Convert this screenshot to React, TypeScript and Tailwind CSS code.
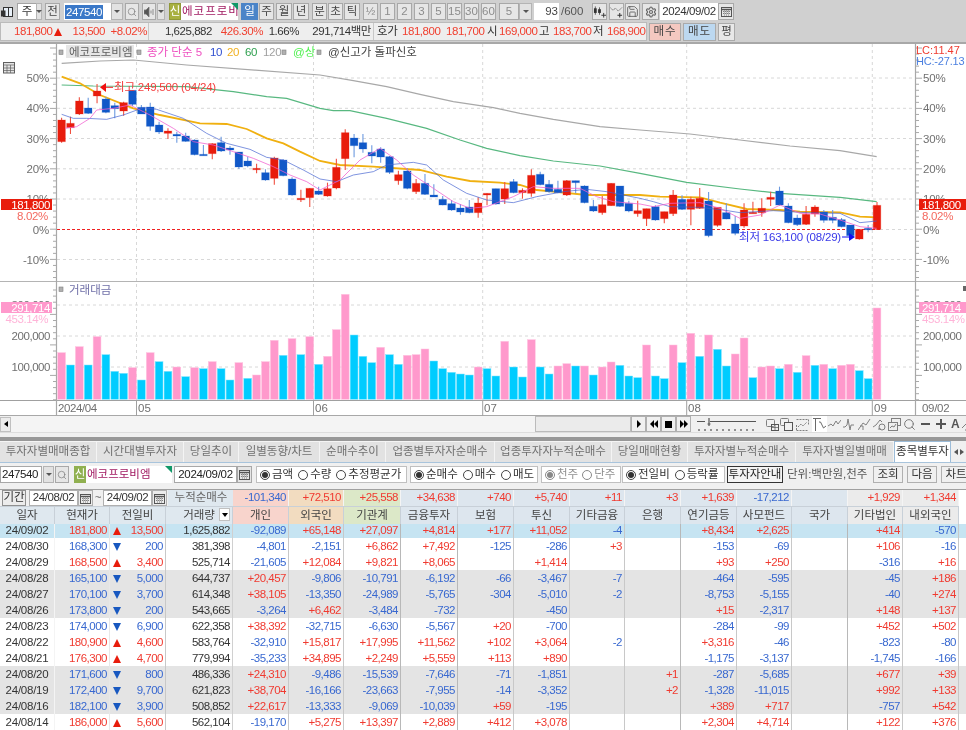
import React from "react";
import { Search, Settings, Save } from "lucide-react";

// [dir, bodyTop, bodyBottom, wickTop, wickBottom] — zoom coordinates (3x, origin y=60); dir 1 = red, 0 = blue
const C: number[][] = [
[1,180,245,173,248],[1,190,203,170,222],[1,123,162,112,165],[0,144,160,113,162],[1,93,108,72,130],[0,117,157,110,160],[0,137,146,128,175],[1,128,153,125,167],[0,91,133,91,138],[0,142,162,135,162],
[0,141,199,128,212],[0,195,216,185,222],[1,213,220,205,237],[0,223,228,215,248],[0,228,244,218,245],[0,240,284,238,286],[0,283,285,255,286],[1,251,281,250,298],[0,248,273,230,276],[0,264,270,258,284],
[0,276,321,276,327],[0,303,318,290,322],[1,325,329,311,340],[0,338,360,328,362],[1,294,355,290,374],[0,300,347,298,349],[0,357,405,352,407],[1,415,418,389,426],[1,385,413,385,441],[0,393,403,380,405],
[1,386,408,368,410],[1,322,384,296,388],[1,218,296,208,330],[0,234,257,222,292],[0,248,267,222,278],[0,277,288,256,310],[0,267,291,262,308],[0,290,337,288,342],[1,344,362,332,374],[0,333,385,325,388],
[1,370,395,357,402],[0,370,403,342,405],[0,405,411,373,411],[0,418,435,408,436],[0,431,450,420,452],[0,444,456,432,464],[0,441,458,420,460],[1,429,458,412,473],[1,400,405,400,436],[0,386,432,386,434],
[1,386,417,366,432],[0,365,398,357,400],[1,391,398,385,416],[1,346,400,328,410],[0,343,374,335,376],[0,373,395,360,398],[0,388,398,362,400],[1,362,405,360,408],[0,362,368,362,400],[0,378,428,376,430],
[0,439,453,420,456],[1,434,458,408,464],[1,370,437,370,437],[0,378,439,378,441],[0,430,453,422,457],[1,452,461,422,470],[1,446,476,446,498],[0,440,480,436,482],[1,455,476,455,490],[1,405,461,390,468],
[0,418,448,406,450],[1,418,448,410,496],[1,415,445,384,447],[0,423,527,396,532],[1,442,496,442,500],[0,458,477,430,478],[0,492,520,468,526],[1,450,498,430,503],[1,457,459,425,460],[1,445,458,415,470],
[1,412,418,395,438],[0,393,435,380,437],[0,438,488,430,490],[0,474,494,464,498],[1,463,493,438,495],[1,441,462,436,470],[0,456,481,450,488],[0,472,481,450,490],[0,479,500,474,502],[0,495,527,495,530],
[1,508,537,508,539],[0,505,508,495,517],[1,436,508,426,510],
];
// volume: [isPink, top] — zoom coordinates (3x, origin y=280)
const V: [number, number][] = [
[1,218],[0,255],[1,200],[0,255],[1,170],[0,224],[0,274],[0,280],[1,263],[0,300],[1,218],[0,245],[0,274],[1,261],[0,290],[1,263],[0,266],[1,245],[0,266],[0,300],[1,248],[0,295],[1,285],[1,245],[1,181],[0,226],[1,176],[0,224],[1,170],[0,253],[1,229],[1,149],[1,43],[0,165],[0,229],[0,248],[1,202],[0,224],[0,253],[1,226],[1,224],[1,207],[0,243],[0,266],[0,277],[0,282],[0,285],[1,261],
[0,266],[0,288],[1,184],[0,261],[0,291],[1,179],[0,261],[0,282],[1,258],[1,251],[0,258],[1,258],[0,285],[1,261],[1,246],[0,256],[0,288],[0,293],[1,195],[0,288],[0,296],[1,195],[0,248],[1,160],[0,229],[1,165],[0,208],[0,258],[1,222],[1,174],[0,293],[1,261],[1,258],[0,266],[1,253],[0,277],[1,227],[0,256],[1,253],[0,266],[1,256],[1,253],[0,272],[0,296],[1,84],
];
const line = (segs: [number, number[][]][]) =>
  segs.flatMap(([ox, pts]) => pts.map(([x, y]) => `${ox + x / 3},${60 + y / 3}`)).join(" ");
const MA_120 = line([[0,[[185,10],[300,3],[400,0],[560,15],[960,45]]],[320,[[100,62],[200,80],[300,103],[400,125],[520,143],[600,160],[700,178],[840,200],[960,210]]],[640,[[150,222],[300,240],[450,258],[600,272],[710,290]]]]);
const MA_60 = line([[0,[[185,75],[280,78],[560,80],[700,95],[800,110],[860,115],[960,145]]],[320,[[40,152],[90,152],[200,175],[320,205],[420,240],[500,265],[600,287],[700,303],[840,318],[960,340]]],[640,[[140,367],[300,387],[420,400],[600,412],[710,425]]]]);
const MA_20 = line([[0,[[185,50],[240,70],[300,105],[400,145],[480,165],[600,190],[680,192],[740,207],[800,235],[850,250],[900,275],[960,303]]],[320,[[60,315],[160,320],[300,330],[380,350],[450,363],[540,368],[600,375],[650,390],[700,395],[800,405],[960,405]]],[640,[[60,410],[180,412],[240,428],[320,447],[420,450],[480,455],[600,457],[660,470],[710,472]]]]);
const MA_10 = line([[0,[[185,163],[220,175],[260,175],[320,178],[370,165],[430,143],[470,148],[550,175],[620,220],[680,250],[750,268],[800,292],[850,300],[910,330],[960,357]]],[320,[[50,365],[100,345],[160,335],[200,315],[280,307],[320,315],[370,360],[440,400],[500,420],[580,428],[650,410],[730,395],[800,388],[860,395],[960,415]]],[640,[[40,425],[90,440],[180,442],[250,450],[300,458],[400,452],[500,458],[600,460],[660,488],[710,483]]]]);
const MA_5 = line([[0,[[195,205],[230,200],[270,175],[290,150],[340,145],[390,135],[450,165],[520,205],[580,245],[640,255],[700,275],[760,295],[820,320],[870,345],[920,365],[960,390]]],[320,[[60,360],[120,300],[180,265],[230,300],[280,345],[340,385],[400,425],[450,445],[500,440],[580,410],[640,380],[700,385],[780,385],[830,410],[880,425],[960,432]]],[640,[[40,440],[90,430],[180,428],[240,445],[300,475],[360,465],[420,435],[480,460],[540,462],[600,480],[660,500],[710,505]]]]);

const cx = (i: number) => 61.6 + i * 8.863;
const GRID_X = [136.5, 313.5, 482.7, 686.7, 872.3];
const PCT = [[50,78],[40,108.3],[30,138.5],[20,168.8],[10,199]];
const AXIS = "#a8a8a8";

function Chart() {
  return (
    <svg width="966" height="373" viewBox="0 43 966 373" className="block">
      <rect x="0" y="43" width="966" height="373" fill="#fff" />
      {[...PCT.map((p) => p[1]), 259.5, 305, 336, 367].map((y) => (
        <line key={y} x1="57" x2="915" y1={y} y2={y} stroke="#d8d8d8" strokeDasharray="3 3" />
      ))}
      {GRID_X.map((x) => (
        <line key={x} x1={x} x2={x} y1="44" y2="400" stroke="#d8d8d8" strokeDasharray="3 3" />
      ))}
      <line x1="57" x2="880" y1="229.5" y2="229.5" stroke="#f02020" strokeDasharray="3 2" />
      <line x1="880" x2="915" y1="229.5" y2="229.5" stroke="#d8d8d8" strokeDasharray="3 3" />
      <line x1="0" x2="966" y1="43.5" y2="43.5" stroke="#a8a8a8" />
      <line x1="0" x2="966" y1="281.5" y2="281.5" stroke="#b4b4b4" strokeWidth="1.2" />
      <line x1="0" x2="966" y1="400.5" y2="400.5" stroke="#a0a0a0" />
      <line x1="0" x2="966" y1="415.5" y2="415.5" stroke="#a8a8a8" />
      <line x1="56.5" x2="56.5" y1="44" y2="416" stroke={AXIS} strokeWidth="1.2" />
      <line x1="915.5" x2="915.5" y1="44" y2="416" stroke={AXIS} strokeWidth="1.2" />
      {GRID_X.map((x) => (
        <line key={x} x1={x} x2={x} y1="400" y2="416" stroke="#a0a0a0" />
      ))}
      {Array.from({ length: 39 }, (_, i) => 48 + i * 6.04).map((y, i) => (
        <g key={y} stroke={AXIS}>
          <line x1={i % 5 === 0 ? 50 : 53} x2="56" y1={y} y2={y} />
          <line x1="916" x2={i % 5 === 0 ? 922 : 919} y1={y} y2={y} />
        </g>
      ))}
      {Array.from({ length: 19 }, (_, i) => 290 + i * 6.1).map((y, i) => (
        <g key={y} stroke={AXIS}>
          <line x1={(i + 1) % 5 === 0 ? 50 : 53} x2="56" y1={y} y2={y} />
          <line x1="916" x2={(i + 1) % 5 === 0 ? 922 : 919} y1={y} y2={y} />
        </g>
      ))}
      <polyline points={MA_120} fill="none" stroke="#a8a8a8" strokeWidth="1.2" />
      <polyline points={MA_60} fill="none" stroke="#58b880" strokeWidth="1.2" />
      <polyline points={MA_20} fill="none" stroke="#f0b010" strokeWidth="1.8" />
      {C.map((c, i) => {
        const x = cx(i);
        const col = c[0] ? "#e81c0c" : "#1058c8";
        const h = Math.max((c[2] - c[1]) / 3, 1.4);
        return (
          <g key={i}>
            <line x1={x} x2={x} y1={60 + c[3] / 3} y2={60 + c[4] / 3} stroke={c[0] ? "#f05040" : "#6c9ae0"} strokeWidth="1.1" />
            <rect x={x - 3.8} y={60 + c[1] / 3} width="7.6" height={h} fill={col} stroke={col} strokeOpacity="0.25" strokeWidth="1" />
          </g>
        );
      })}
      <polyline points={MA_10} fill="none" stroke="#4060d0" strokeWidth="0.9" opacity="0.75" />
      <polyline points={MA_5} fill="none" stroke="#f060d0" strokeWidth="0.9" opacity="0.85" />
      <g>
        <line x1="104" x2="113" y1="87.3" y2="87.3" stroke="#f02020" />
        <polygon points="100,87.3 106,83 106,92" fill="#f01010" />
        <text x="114" y="90.5" fontSize="11.5" fill="#f43c3c" letterSpacing="-0.2">최고 249,500 (04/24)</text>
        <text x="739" y="241" fontSize="11.5" fill="#3838e8" letterSpacing="-0.2">최저 163,100 (08/29)</text>
        <line x1="842" x2="851" y1="237" y2="237" stroke="#1010f0" />
        <polygon points="855,237 849,233 849,241" fill="#1010f0" />
      </g>
      {V.map(([p, top], i) => (
        <rect key={i} x={cx(i) - 3.9} y={280 + top / 3} width="7.8" height={399.3 - (280 + top / 3)} fill={p ? "#ff99cc" : "#00ccff"} stroke={p ? "#ffc4e0" : "#80e4ff"} strokeWidth="0.5" />
      ))}
      <g fontSize="11.5" fill="#707070">
        {[...PCT, [0, 229.5], [-10, 259.5]].map(([p, y]) => (
          <React.Fragment key={p}>
            <text x="49" y={y + 4} textAnchor="end" letterSpacing="-0.2">{p}%</text>
            <text x="923" y={y + 4} letterSpacing="-0.2">{p}%</text>
          </React.Fragment>
        ))}
        {[["200,000", 336], ["100,000", 367], ["300,000", 305]].map(([t, y]) => (
          <React.Fragment key={t as string}>
            <text x="50" y={(y as number) + 4} textAnchor="end" letterSpacing="-0.45">{t}</text>
            <text x="923" y={(y as number) + 4} letterSpacing="-0.45">{t}</text>
          </React.Fragment>
        ))}
        <text x="58" y="412" letterSpacing="-0.4">2024/04</text>
        <text x="138" y="412">05</text>
        <text x="315" y="412">06</text>
        <text x="484" y="412">07</text>
        <text x="688" y="412">08</text>
        <text x="874" y="412">09</text>
        <text x="922" y="412" letterSpacing="-0.3">09/02</text>
      </g>
      <rect x="1" y="199" width="51" height="11" fill="#e81c0c" />
      <rect x="919" y="199" width="47" height="11" fill="#e81c0c" />
      <text x="50" y="208.5" textAnchor="end" fontSize="11.5" fill="#fff" letterSpacing="-0.4">181,800</text>
      <text x="922" y="208.5" fontSize="11.5" fill="#fff" letterSpacing="-0.4">181,800</text>
      <text x="48" y="219.5" textAnchor="end" fontSize="11.5" fill="#f46a60" letterSpacing="-0.3">8.02%</text>
      <text x="922" y="219.5" fontSize="11.5" fill="#f46a60" letterSpacing="-0.3">8.02%</text>
      <rect x="1" y="302" width="51" height="11" fill="#ff99cc" />
      <rect x="919" y="302" width="47" height="11" fill="#ff99cc" />
      <text x="50" y="311.5" textAnchor="end" fontSize="11.5" fill="#fff" letterSpacing="-0.4">291,714</text>
      <text x="922" y="311.5" fontSize="11.5" fill="#fff" letterSpacing="-0.4">291,714</text>
      <text x="48" y="322.5" textAnchor="end" fontSize="11.5" fill="#ffb4d8" letterSpacing="-0.4">453.14%</text>
      <text x="922" y="322.5" fontSize="11.5" fill="#ffb4d8" letterSpacing="-0.4">453.14%</text>
      <text x="916" y="54" fontSize="11" fill="#f03c30">LC:11.47</text>
      <text x="916" y="65" fontSize="11" fill="#4c80e0" letterSpacing="-0.2">HC:-27.13</text>
      <g fontSize="11.5">
        {[61, 139, 284, 319].map((x) => (
          <rect key={x} x={x - 2} y="50" width="4" height="4.5" fill="#b0b0b0" stroke="#808080" strokeWidth="0.6" />
        ))}
        <rect x="66" y="45" width="68" height="13" fill="#e6e6e6" />
        <text x="69" y="56" fill="#606060">에코프로비엠</text>
        <text x="147" y="56" fill="#ee50c0">종가 단순 5</text>
        <text x="210" y="56" fill="#3050d0" letterSpacing="-0.3">10</text>
        <text x="227" y="56" fill="#f0b020" letterSpacing="-0.3">20</text>
        <text x="245" y="56" fill="#30a050" letterSpacing="-0.3">60</text>
        <text x="263" y="56" fill="#a0a0a0" letterSpacing="-0.3">120</text>
        <text x="293" y="56" fill="#50f050">@상</text>
        <text x="328" y="56" fill="#444">@신고가 돌파신호</text>
        <rect x="59" y="287" width="4" height="4.5" fill="#b0b0b0" stroke="#808080" strokeWidth="0.6" />
        <text x="69" y="294" fill="#7070a8">거래대금</text>
      </g>
      <g fill="none" stroke="#606060">
        <rect x="3.5" y="62.5" width="11" height="10.5" fill="#e4e4e4" />
        <path d="M3.5 65h11M3.5 68h11M3.5 70.5h11M7 65v8M10.5 65v8" strokeWidth="0.7" />
      </g>
      <rect x="963" y="286" width="3" height="5" fill="#666" />
    </svg>
  );
}

function B({ c = "", t = "text-[#444]", children }: { c?: string; t?: string; children?: React.ReactNode }) {
  return (
    <div className={`h-[17px] flex items-center justify-center border border-[#a8a8a8] bg-[#e6e6e6] shrink-0 ${t} ${c}`}>
      {children}
    </div>
  );
}
function Dd({ c = "" }: { c?: string }) {
  return (
    <div className={`h-[17px] flex items-center justify-center border border-[#b4b4b4] bg-[#e2e2e2] shrink-0 ${c}`}>
      <span className="w-0 h-0 border-x-[3px] border-x-transparent border-t-[3px] border-t-[#555]" />
    </div>
  );
}
function Cal() {
  return (
    <svg width="11" height="11" viewBox="0 0 11 11" fill="none" stroke="#555">
      <rect x="0.5" y="1.5" width="10" height="9" />
      <path d="M0.5 3.5h10" strokeWidth="1.4" />
      <path d="M2 5.5h7M2 7.5h7M3.5 4.5v5M5.5 4.5v5M7.5 4.5v5" strokeWidth="0.7" strokeDasharray="1 1" />
    </svg>
  );
}
function CandleIcon() {
  return (
    <svg width="14" height="12" viewBox="0 0 14 12" fill="#333" stroke="#333">
      <path d="M2.5 0v9M7 1v8" strokeWidth="0.8" />
      <rect x="1" y="2" width="3" height="5" stroke="none" />
      <rect x="5.5" y="3" width="3" height="4" stroke="none" />
      <path d="M9 9.5h5M11.5 7v5" strokeWidth="1" fill="none" />
    </svg>
  );
}
function LineIcon() {
  return (
    <svg width="14" height="12" viewBox="0 0 14 12" fill="none" stroke="#666">
      <path d="M0 1l3 3 3-2 3 3 4-4" strokeWidth="0.9" strokeDasharray="2 0.6" />
      <path d="M8 9.5h5M10.5 7v5" stroke="#333" strokeWidth="1.1" />
    </svg>
  );
}

function Toolbar1() {
  const T = "w-[15px] ml-[2px]";
  const G = "text-[#8c8c8c]";
  return (
    <div className="flex items-start h-[22px] pt-[3px] bg-[#d0d0d0] text-[11.5px]">
      <div className="w-[13px] h-[17px] shrink-0 flex items-center justify-end">
        <svg width="12" height="12" viewBox="0 0 12 12" fill="none" stroke="#333">
          <rect x="2.5" y="1.5" width="9" height="9" fill="#e8f0f8" />
          <path d="M7.5 1.5v9" />
          <rect x="0" y="5" width="4" height="5" fill="#333" />
        </svg>
      </div>
      <div className="ml-[4px] w-[20px] h-[17px] bg-white border border-[#a4a4a4] flex items-center justify-center shrink-0 text-[#333]">주</div>
      <Dd c="w-[6px] -ml-px" />
      <B c="w-[15px] ml-[3px]">전</B>
      <div className="ml-[4px] w-[47px] h-[17px] bg-white flex items-center pl-px shrink-0">
        <span className="bg-[#3a78c8] text-white px-px tracking-[-0.4px] leading-[14px]">247540</span>
      </div>
      <Dd c="w-[12px]" />
      <B c="w-[14px] ml-[2px]"><Search size={10} strokeWidth={1.6} color="#777" /></B>
      <B c="w-[14px] ml-[3px]">
        <svg width="11" height="10" viewBox="0 0 11 10" fill="#555"><path d="M0 3h2l3-3v10L2 7H0zM7 3.5v3M9 2v6" stroke="#777" strokeWidth="0.8" /></svg>
      </B>
      <Dd c="w-[8px] ml-px" />
      <div className="ml-[4px] w-[12px] h-[17px] bg-[#a8b040] text-white flex items-center justify-center shrink-0 border border-[#909838]">신</div>
      <div className="relative w-[57px] h-[17px] bg-white text-[#a01860] flex items-center overflow-hidden whitespace-nowrap shrink-0 pl-px tracking-[1px]">
        에코프로비
        <span className="absolute top-0 right-0 w-0 h-0 border-l-[7px] border-l-transparent border-t-[7px] border-t-[#109868]" />
      </div>
      <div className="ml-[3px] w-[17px] h-[17px] bg-[#4a84c8] text-white flex items-center justify-center shrink-0">일</div>
      <B c="w-[15px] ml-px">주</B>
      <B c="w-[16px] ml-[2px]">월</B>
      <B c="w-[16px] ml-px">년</B>
      <B c="w-[15px] ml-[3px]">분</B>
      <B c="w-[15px] ml-px">초</B>
      <B c="w-[16px] ml-px">틱</B>
      <B c="w-[15px] ml-[3px]" t={G}>½</B>
      <B c={T} t={G}>1</B><B c={T} t={G}>2</B><B c={T} t={G}>3</B><B c={T} t={G}>5</B>
      <B c="w-[15px] ml-px" t={G}>15</B><B c={T} t={G}>30</B><B c={T} t={G}>60</B>
      <B c="w-[20px] ml-[3px]" t={G}>5</B>
      <Dd c="w-[13px]" />
      <div className="ml-[2px] w-[25px] h-[17px] bg-white flex items-center justify-end pr-px shrink-0 text-[#444]">93</div>
      <div className="ml-[2px] w-[29px] shrink-0 h-[17px] flex items-center text-[#555]">/600</div>
      <B c="w-[15px] ml-[2px]"><CandleIcon /></B>
      <B c="w-[15px] ml-[2px]"><LineIcon /></B>
      <B c="w-[15px] ml-px"><Save size={13} strokeWidth={1.5} color="#555" /></B>
      <B c="w-[17px] ml-[2px]"><Settings size={12} strokeWidth={2.4} color="#666" /></B>
      <div className="ml-px w-[58px] h-[17px] bg-white flex items-center justify-center shrink-0 text-[#333] tracking-[-0.4px]">2024/09/02</div>
      <B c="w-[16px]"><Cal /></B>
    </div>
  );
}

function Toolbar2() {
  const R = "text-[#f04030]";
  return (
    <div className="flex h-[21px] bg-[#d0d0d0] border-b border-[#a8a8a8] text-[11.5px]">
      <div className="w-[647px] h-[19px] bg-[#eeeeee] border border-[#bbbbbb] shrink-0 whitespace-nowrap">
        <div className="flex h-full items-center tracking-[-0.45px]">
          <span className={`ml-[13px] w-[38px] text-right ${R}`}>181,800</span>
          <span className="ml-[2px] w-0 h-0 border-x-[4.5px] border-x-transparent border-b-[8px] border-b-[#e81c0c]" />
          <span className={`w-[43px] text-right ${R}`}>13,500</span>
          <span className={`w-[42px] text-right ${R}`}>+8.02%</span>
          <span className="ml-px h-full border-l border-[#c8c8c8]" />
          <span className="w-[63px] text-right text-[#333]">1,625,882</span>
          <span className={`w-[51px] text-right ${R}`}>426.30%</span>
          <span className="w-[36px] text-right text-[#333]">1.66%</span>
          <span className="w-[72px] text-right text-[#333]">291,714백만</span>
          <span className="ml-[2px] h-full border-l border-[#c8c8c8]" />
          <span className="ml-[3px] w-[20px] text-[#333]">호가</span>
          <span className={`ml-[5px] w-[36px] text-right ${R}`}>181,800</span>
          <span className={`ml-[8px] w-[37px] text-right ${R}`}>181,700</span>
          <span className="ml-[4px] text-[#333] w-[8px]">시</span>
          <span className={`ml-[4px] w-[36px] text-right ${R}`}>169,000</span>
          <span className="ml-[4px] text-[#333] w-[9px]">고</span>
          <span className={`ml-[5px] w-[36px] text-right ${R}`}>183,700</span>
          <span className="ml-[4px] text-[#333] w-[9px]">저</span>
          <span className={`ml-[5px] w-[37px] text-right ${R}`}>168,900</span>
        </div>
      </div>
      <div className="ml-[2px] mt-px w-[32px] h-[18px] bg-[#f4c8c0] border border-[#aaaaaa] flex items-center justify-center shrink-0 text-[#444] tracking-[1px]">매수</div>
      <div className="ml-[2px] mt-px w-[33px] h-[18px] bg-[#bcd8f0] border border-[#aaaaaa] flex items-center justify-center shrink-0 text-[#444] tracking-[1px]">매도</div>
      <div className="ml-[2px] mt-px w-[17px] h-[18px] bg-[#e8e8e8] border border-[#aaaaaa] flex items-center justify-center shrink-0 text-[#444]">평</div>
    </div>
  );
}

function Ic({ c = "", d }: { c?: string; d: React.ReactNode }) {
  return (
    <svg width="13" height="13" viewBox="0 0 13 13" fill="none" stroke="#808080" className={`shrink-0 ${c}`}>
      {d}
    </svg>
  );
}

function Transport() {
  const Btn = "w-[15px] h-[16px] border border-[#b0b0b0] bg-[#f0f0f0] flex items-center justify-center shrink-0";
  return (
    <div className="flex items-center h-[16px] bg-[#f0f0f0]">
      <div className="w-[11px] h-[15px] border border-[#c0c0c0] bg-[#ececec] flex items-center justify-center shrink-0">
        <span className="w-0 h-0 border-y-[3.5px] border-y-transparent border-r-[4px] border-r-black" />
      </div>
      <div className="w-[524px] h-[16px] bg-[#f4f4f4] shrink-0" />
      <div className="w-[96px] h-[16px] bg-[#ebebeb] border border-[#bbbbbb] shrink-0" />
      <div className={Btn}><span className="w-0 h-0 border-y-[4px] border-y-transparent border-l-[4px] border-l-black" /></div>
      <div className={Btn}>
        <span className="w-0 h-0 border-y-[4px] border-y-transparent border-r-[4px] border-r-black" />
        <span className="w-0 h-0 border-y-[4px] border-y-transparent border-r-[4px] border-r-black" />
      </div>
      <div className={Btn}><span className="w-[7px] h-[7px] bg-black" /></div>
      <div className={Btn}>
        <span className="w-0 h-0 border-y-[4px] border-y-transparent border-l-[4px] border-l-black" />
        <span className="w-0 h-0 border-y-[4px] border-y-transparent border-l-[4px] border-l-black" />
      </div>
      <svg width="62" height="16" viewBox="0 0 62 16" stroke="#555" className="ml-[5px] shrink-0">
        <path d="M1 5.5h8M14 5.5h46" fill="none" />
        <path d="M13 2v8M11.5 8h3" strokeWidth="1.2" />
        <path d="M3 13v2M9 13v2M15 13v2M21 13v2M27 13v2M33 13v2M39 13v2M45 13v2M51 13v2M57 13v2" stroke="#333" />
      </svg>
      <Ic c="ml-[8px]" d={<><rect x="0.5" y="1.5" width="8" height="7" rx="1" /><rect x="5.5" y="6.5" width="7" height="6" stroke="#555" /><path d="M9 6.5v6M5.5 9.5h7" stroke="#555" strokeWidth="0.7" /></>} />
      <Ic c="ml-px" d={<><rect x="0.5" y="0.5" width="8" height="7" rx="1" /><rect x="4.5" y="4.5" width="8" height="8" fill="#f0f0f0" stroke="#555" /></>} />
      <Ic c="ml-[3px]" d={<path d="M0.5 1.5h12M12.5 1.5v6M0.5 12.5h12M0.5 7v5M2 9l3-3 2 2 4-4" strokeDasharray="2 1" />} />
      <div className="ml-[3px] w-[15px] h-[16px] bg-white flex items-center justify-center shrink-0">
        <svg width="13" height="13" viewBox="0 0 13 13" fill="none" stroke="#6a6a6a"><path d="M0 0.5h8M2.5 1v12M6 4h1.5l3 6 2.5-2" /></svg>
      </div>
      <Ic c="ml-px" d={<path d="M0 8l3-2 2 2 3-5 2 3 3-4" />} />
      <Ic c="ml-[2px]" d={<path d="M0 9h2l2-2 1-6 2 11 1-5h3" />} />
      <Ic c="ml-[2px]" d={<><path d="M0 12l5-7 3 2 4-6" /><path d="M2 8h3v4" /></>} />
      <Ic c="ml-[2px]" d={<><path d="M0 9l3-2 4-5 2 2" /><circle cx="9" cy="9" r="3" /><path d="M5 11h3" /></>} />
      <Ic c="ml-[2px]" d={<><rect x="3.5" y="0.5" width="9" height="7" /><rect x="0.5" y="4.5" width="9" height="8" fill="#f0f0f0" /><path d="M2 10l2-2 2 1 2-3" /></>} />
      <Search size={13} strokeWidth={1.8} color="#777" className="ml-[2px] shrink-0" />
      <span className="ml-[5px] w-[9px] h-[2px] bg-[#555] shrink-0" />
      <span className="relative ml-[6px] w-[10px] h-[10px] shrink-0">
        <span className="absolute left-0 top-[4px] w-[10px] h-[2px] bg-[#555]" />
        <span className="absolute left-[4px] top-0 w-[2px] h-[10px] bg-[#555]" />
      </span>
      <span className="ml-[5px] text-[12px] font-bold text-[#555] leading-none shrink-0">A</span>
      <Ic c="ml-[2px]" d={<path d="M0 10l8-8M8 2l5 0M3 12h6" />} />
    </div>
  );
}

const TABS: [string, string][] = [
  ["투자자별매매종합", "w-[97px]"],
  ["시간대별투자자", "w-[87px]"],
  ["당일추이", "w-[55px]"],
  ["일별동향/차트", "w-[81px]"],
  ["순매수추이", "w-[66px]"],
  ["업종별투자자순매수", "w-[109px]"],
  ["업종투자자누적순매수", "w-[117px]"],
  ["당일매매현황", "w-[76px]"],
  ["투자자별누적순매수", "w-[108px]"],
  ["투자자별일별매매", "w-[98px]"],
];

function Tabs() {
  return (
    <div className="flex h-[22px] bg-[#f0f0f0] border-b border-[#a8c4dc] text-[11.5px]">
      {TABS.map(([t, w]) => (
        <div key={t} className={`${w} h-[21px] shrink-0 bg-[#e2e2e2] border-r border-[#f4f4f4] border-t flex items-center justify-center text-[#707070] whitespace-nowrap overflow-hidden`}>
          {t}
        </div>
      ))}
      <div className="w-[57px] h-[21px] shrink-0 bg-white border-x border-t border-[#9cbcd8] flex items-center justify-center text-[#333] whitespace-nowrap overflow-hidden">
        종목별투자
      </div>
      <div className="w-[15px] h-[21px] shrink-0 bg-[#f0f0f0] flex items-center justify-center gap-[2px]">
        <span className="w-0 h-0 border-y-[3.5px] border-y-transparent border-r-[4px] border-r-[#555]" />
        <span className="w-0 h-0 border-y-[3.5px] border-y-transparent border-l-[4px] border-l-[#555]" />
      </div>
    </div>
  );
}

function Radio({ on, gray, children }: { on?: boolean; gray?: boolean; children: React.ReactNode }) {
  return (
    <span className={`inline-flex items-center gap-[2px] whitespace-nowrap ${gray ? "text-[#909090]" : "text-[#333]"}`}>
      <span className={`w-[10px] h-[10px] rounded-full border ${gray ? "border-[#888888]" : "border-[#444444]"} bg-white flex items-center justify-center`}>
        {on && <span className={`w-[6px] h-[6px] rounded-full ${gray ? "bg-[#888888]" : "bg-[#333333]"}`} />}
      </span>
      {children}
    </span>
  );
}
const GROUP = "h-[17px] bg-white border border-[#c0c0c0] flex items-center px-[3px] shrink-0";

function Options() {
  const Tb = "h-[17px] bg-[#f0f0f0] border border-[#b0b0b0] flex items-center justify-center shrink-0 text-[#333]";
  return (
    <div className="flex h-[24px] pt-[3px] bg-[#f0f0f0] text-[11.5px] whitespace-nowrap">
      <div className="w-[42px] h-[17px] bg-white border border-[#a8a8a8] flex items-center pl-px shrink-0 tracking-[-0.4px] text-[#222]">247540</div>
      <Dd c="w-[11px] ml-px" />
      <B c="w-[14px] ml-px"><Search size={10} strokeWidth={1.6} color="#777" /></B>
      <div className="ml-[5px] w-[12px] h-[17px] bg-[#90b050] text-white flex items-center justify-center shrink-0">신</div>
      <div className="relative w-[86px] h-[17px] bg-white text-[#a01860] flex items-center shrink-0 pl-px">
        에코프로비엠
        <span className="absolute top-0 right-0 w-0 h-0 border-l-[7px] border-l-transparent border-t-[7px] border-t-[#109868]" />
      </div>
      <div className="ml-[2px] w-[63px] h-[17px] bg-white border border-[#a8a8a8] flex items-center justify-center shrink-0 tracking-[-0.3px] text-[#222]">2024/09/02</div>
      <B c="w-[15px]"><Cal /></B>
      <div className={`${GROUP} ml-[4px] w-[151px] gap-[5px]`}>
        <Radio on>금액</Radio><Radio>수량</Radio><Radio>추정평균가</Radio>
      </div>
      <div className={`${GROUP} ml-[3px] w-[128px] gap-[5px]`}>
        <Radio on>순매수</Radio><Radio>매수</Radio><Radio>매도</Radio>
      </div>
      <div className={`${GROUP} ml-[3px] w-[80px] gap-[4px]`}>
        <Radio on gray>천주</Radio><Radio gray>단주</Radio>
      </div>
      <div className={`${GROUP} ml-px w-[103px] gap-[5px]`}>
        <Radio on>전일비</Radio><Radio>등락률</Radio>
      </div>
      <div className="ml-[2px] w-[56px] h-[17px] bg-[#f4f4f4] border border-[#333333] flex items-center justify-center shrink-0 text-[#222]">투자자안내</div>
      <div className="ml-[4px] w-[86px] shrink-0 text-[#555] leading-[17px]">단위:백만원,천주</div>
      <div className={`${Tb} w-[30px]`}>조회</div>
      <div className={`${Tb} w-[30px] ml-[4px]`}>다음</div>
      <div className={`${Tb} w-[30px] ml-[4px]`}>차트</div>
    </div>
  );
}

const COLS = "grid grid-cols-[55px_55px_56px_67px_56px_55px_57px_57px_56px_56px_55px_56px_56px_55px_56px_55px_56px_7px]";

const col = (v: string) =>
  v.startsWith("+") ? "text-[#f03a30]" : v.startsWith("-") ? "text-[#3868d0]" : "text-[#333]";

const SUM: [string, string][] = [
  ["-101,340", "bg-[#f8d4cc]"],
  ["+72,510", "bg-[#f2dcc0]"],
  ["+25,558", "bg-[#dce8c8]"],
  ["+34,638", "bg-[#dde6ee]"],
  ["+740", "bg-[#dde6ee]"],
  ["+5,740", "bg-[#dde6ee]"],
  ["+11", "bg-[#dde6ee]"],
  ["+3", "bg-[#dde6ee]"],
  ["+1,639", "bg-[#dde6ee]"],
  ["-17,212", "bg-[#dde6ee]"],
  ["", "bg-[#dde6ee]"],
  ["+1,929", "bg-[#ebebeb]"],
  ["+1,344", "bg-[#ebebeb]"],
];

function Summary() {
  return (
    <div className={`${COLS} h-[17px] border-t border-[#a0a0a0] text-[11.5px]`}>
      <div className="col-span-4 flex items-center h-[16px] bg-[#f0f0f0] text-[#333]">
        <div className="ml-[2px] w-[24px] h-[16px] bg-[#ececec] border border-[#909090] flex items-center justify-center shrink-0">기간</div>
        <div className="ml-[3px] w-[49px] h-[16px] bg-white border border-[#b0b0b0] flex items-center justify-center shrink-0 tracking-[-0.4px]">24/08/02</div>
        <div className="w-[15px] h-[16px] bg-[#ececec] border border-[#b0b0b0] flex items-center justify-center shrink-0"><Cal /></div>
        <div className="w-[10px] text-center shrink-0 text-[#666]">~</div>
        <div className="w-[49px] h-[16px] bg-white border border-[#b0b0b0] flex items-center justify-center shrink-0 tracking-[-0.4px]">24/09/02</div>
        <div className="w-[15px] h-[16px] bg-[#ececec] border border-[#b0b0b0] flex items-center justify-center shrink-0"><Cal /></div>
        <div className="w-[66px] h-[16px] bg-[#dfe8ef] flex items-center justify-center shrink-0 text-[#666] ml-px">누적순매수</div>
      </div>
      {SUM.map(([v, bg], i) => (
        <div key={i} className={`${bg} ${col(v)} h-[16px] border-r border-[#f4f4f4] flex items-center justify-end pr-[2px] tracking-[-0.5px]`}>
          {v}
        </div>
      ))}
      <div className="bg-white" />
    </div>
  );
}

const HEAD: [string, string][] = [
  ["일자", "bg-[#dfe8ef]"], ["현재가", "bg-[#dfe8ef]"], ["전일비", "bg-[#dfe8ef]"], ["거래량", "bg-[#dfe8ef]"],
  ["개인", "bg-[#f8d4cc]"], ["외국인", "bg-[#f2dcc0]"], ["기관계", "bg-[#dce8c8]"],
  ["금융투자", "bg-[#dde6ee]"], ["보험", "bg-[#dde6ee]"], ["투신", "bg-[#dde6ee]"], ["기타금융", "bg-[#dde6ee]"], ["은행", "bg-[#dde6ee]"], ["연기금등", "bg-[#dde6ee]"], ["사모펀드", "bg-[#dde6ee]"], ["국가", "bg-[#dde6ee]"],
  ["기타법인", "bg-[#ebebeb]"], ["내외국인", "bg-[#ebebeb]"],
];

function Header() {
  return (
    <div className={`${COLS} h-[16px] text-[11.5px] text-[#444]`}>
      {HEAD.map(([t, bg], i) => (
        <div key={t} className={`${bg} relative flex items-center justify-center border-r border-t border-[#c8d0d8]`}>
          {t}
          {i === 3 && (
            <span className="absolute right-[2px] top-[1px] w-[11px] h-[13px] bg-white border border-[#c0c0c0] flex items-center justify-center">
              <span className="w-0 h-0 border-x-[3.5px] border-x-transparent border-t-[4px] border-t-black" />
            </span>
          )}
        </div>
      ))}
      <div className="bg-white" />
    </div>
  );
}

const ROWS: string[][] = [
  ["24/09/02","181,800","u","13,500","1,625,882","-92,089","+65,148","+27,097","+4,814","+177","+11,052","-4","","+8,434","+2,625","","+414","-570"],
  ["24/08/30","168,300","d","200","381,398","-4,801","-2,151","+6,862","+7,492","-125","-286","+3","","-153","-69","","+106","-16"],
  ["24/08/29","168,500","u","3,400","525,714","-21,605","+12,084","+9,821","+8,065","","+1,414","","","+93","+250","","-316","+16"],
  ["24/08/28","165,100","d","5,000","644,737","+20,457","-9,806","-10,791","-6,192","-66","-3,467","-7","","-464","-595","","-45","+186"],
  ["24/08/27","170,100","d","3,700","614,348","+38,105","-13,350","-24,989","-5,765","-304","-5,010","-2","","-8,753","-5,155","","-40","+274"],
  ["24/08/26","173,800","d","200","543,665","-3,264","+6,462","-3,484","-732","","-450","","","+15","-2,317","","+148","+137"],
  ["24/08/23","174,000","d","6,900","622,358","+38,392","-32,715","-6,630","-5,567","+20","-700","","","-284","-99","","+452","+502"],
  ["24/08/22","180,900","u","4,600","583,764","-32,910","+15,817","+17,995","+11,562","+102","+3,064","-2","","+3,316","-46","","-823","-80"],
  ["24/08/21","176,300","u","4,700","779,994","-35,233","+34,895","+2,249","+5,559","+113","+890","","","-1,175","-3,137","","-1,745","-166"],
  ["24/08/20","171,600","d","800","486,336","+24,310","-9,486","-15,539","-7,646","-71","-1,851","","+1","-287","-5,685","","+677","+39"],
  ["24/08/19","172,400","d","9,700","621,823","+38,704","-16,166","-23,663","-7,955","-14","-3,352","","+2","-1,328","-11,015","","+992","+133"],
  ["24/08/16","182,100","d","3,900","508,852","+22,617","-13,333","-9,069","-10,039","+59","-195","","","+389","+717","","-757","+542"],
  ["24/08/14","186,000","u","5,600","562,104","-19,170","+5,275","+13,397","+2,889","+412","+3,078","","","+2,304","+4,714","","+122","+376"],
];
const rowBg = (i: number) =>
  i === 0 ? "bg-[#c6e4f2]" : i >= 3 && i <= 5 ? "bg-[#e4e4e4]" : i >= 9 && i <= 11 ? "bg-[#e4e4e4]" : "bg-white";
const CELL = "flex items-center justify-end pr-[2px] tracking-[-0.5px] border-r";

function Table() {
  return (
    <div className="text-[11.5px]">
      {ROWS.map((r, i) => {
        const up = r[2] === "u";
        const tone = up ? "text-[#f03a30]" : "text-[#3868d0]";
        return (
          <div key={r[0]} className={`${COLS} h-[16px] ${rowBg(i)}`}>
            <div className="flex items-center justify-center tracking-[-0.25px] text-[#333] border-r border-[#f4f4f4]">{r[0]}</div>
            <div className={`${CELL} ${tone} border-[#e8e8e8]`}>{r[1]}</div>
            <div className={`flex items-center justify-between pl-[3px] pr-[2px] tracking-[-0.5px] border-r border-[#c8c8c8] ${tone}`}>
              {up ? (
                <span className="w-0 h-0 border-x-[4.5px] border-x-transparent border-b-[8px] border-b-[#e81c0c]" />
              ) : (
                <span className="w-0 h-0 border-x-[4.5px] border-x-transparent border-t-[8px] border-t-[#1858c0]" />
              )}
              {r[3]}
            </div>
            <div className={`${CELL} text-[#333] border-[#d0d0d0]`}>{r[4]}</div>
            {r.slice(5).map((v, j) => (
              <div key={j} className={`${CELL} ${col(v)} ${j === 2 || j === 3 || j === 7 || j === 10 ? "border-[#b8b8b8]" : "border-[#c8c8c8]"}`}>
                {v}
              </div>
            ))}
            <div />
          </div>
        );
      })}
    </div>
  );
}

export default function App() {
  return (
    <div className="w-[966px] h-[730px] overflow-hidden bg-white font-['Liberation_Sans','Noto_Sans_CJK_KR',sans-serif] blur-[0.45px]">
      <Toolbar1 />
      <Toolbar2 />
      <Chart />
      <Transport />
      <div className="h-[5px] bg-[#f0f0f0] border-t border-[#dddddd]" />
      <div className="h-[4px] bg-[#989898]" />
      <Tabs />
      <Options />
      <div className="h-[2px] bg-[#f0f0f0]" />
      <Summary />
      <Header />
      <Table />
    </div>
  );
}
